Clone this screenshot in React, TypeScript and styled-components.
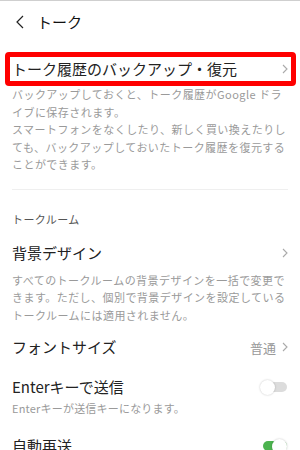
import React from "react";
import styled, { createGlobalStyle, css } from "styled-components";

const Global = createGlobalStyle`
  html, body { margin: 0; padding: 0; background: #fff; }
  body {
    font-family: "Noto Sans CJK JP", "Noto Sans", sans-serif;
    color: #222;
    -webkit-font-smoothing: antialiased;
  }
`;

const Page = styled.div`
  width: 300px;
  height: 450px;
  overflow: hidden;
  border-top: 1px solid #cfcfcf;
  box-sizing: border-box;
`;

const Header = styled.header`
  height: 41px;
  display: flex;
  align-items: center;
  gap: 13px;
  padding-left: 16px;
`;

const HeaderTitle = styled.h1`
  margin: 0;
  font-size: 15px;
  font-weight: 400;
  line-height: 20px;
  color: #111;
`;

const Row = styled.div<{ $mt?: number; $h?: number; $highlight?: boolean }>`
  position: relative;
  display: flex;
  align-items: center;
  justify-content: space-between;
  height: ${(p) => p.$h ?? 34}px;
  margin-top: ${(p) => p.$mt ?? 0}px;
  padding: 0 12px;
  ${(p) =>
    p.$highlight &&
    css`
      &::after {
        content: "";
        position: absolute;
        left: 5px;
        right: 4px;
        top: 0;
        bottom: 0;
        border: 5px solid #ff0000;
        border-radius: 4px;
        pointer-events: none;
      }
    `}
`;

const Title = styled.span`
  font-size: 15px;
  line-height: 20px;
  color: #222;
`;

const Trail = styled.span`
  display: flex;
  align-items: center;
  gap: 6px;
  color: #999;
  font-size: 13px;
`;

const Desc = styled.p<{ $mt?: number; $small?: boolean }>`
  margin: ${(p) => p.$mt ?? 0}px 0 0;
  padding: 0 12px;
  font-size: 11px;
  letter-spacing: ${(p) => (p.$small ? 0.2 : 0.45)}px;
  line-height: ${(p) => (p.$small ? 16 : 17.5)}px;
  color: #9a9a9a;
`;

const Divider = styled.hr`
  margin: 15px 12px 0;
  border: 0;
  border-top: 1px solid #efefef;
  height: 0;
`;

const SectionLabel = styled.div`
  margin-top: 20px;
  padding: 0 12px;
  font-size: 11px;
  letter-spacing: 0.4px;
  line-height: 18px;
  color: #555;
`;

const Toggle = styled.span<{ $on?: boolean }>`
  position: relative;
  display: inline-block;
  width: 27px;
  height: 15px;
  margin-right: 1px;
  &::before {
    content: "";
    position: absolute;
    left: 3px;
    right: 0;
    top: 2.5px;
    height: 10px;
    border-radius: 5px;
    background: ${(p) => (p.$on ? "#4cb34f" : "#dcdcdc")};
  }
  &::after {
    content: "";
    position: absolute;
    top: 0;
    left: ${(p) => (p.$on ? "12px" : "0")};
    width: 15px;
    height: 15px;
    border-radius: 50%;
    background: #fff;
    box-shadow: 0 0 2px rgba(0, 0, 0, 0.25);
  }
`;

const Chevron = () => (
  <svg width="6" height="10" viewBox="0 0 6 10">
    <polyline points="1,1 5,5 1,9" fill="none" stroke="#aaa" strokeWidth="1.1" />
  </svg>
);

const Back = () => (
  <svg width="8" height="14" viewBox="0 0 8 14">
    <polyline points="7,1 1,7 7,13" fill="none" stroke="#222" strokeWidth="1.2" />
  </svg>
);

export default function App() {
  return (
    <>
      <Global />
      <Page>
        <Header>
          <Back />
          <HeaderTitle>トーク</HeaderTitle>
        </Header>

        <Row $mt={10} $highlight>
          <Title>トーク履歴のバックアップ・復元</Title>
          <Chevron />
        </Row>
        <Desc>
          バックアップしておくと、トーク履歴がGoogle ドライブに保存されます。
          <br />
          スマートフォンをなくしたり、新しく買い換えたりしても、バックアップしておいたトーク履歴を復元することができます。
        </Desc>

        <Divider />

        <SectionLabel>トークルーム</SectionLabel>

        <Row $mt={8} $h={35}>
          <Title>背景デザイン</Title>
          <Chevron />
        </Row>
        <Desc $mt={1}>
          すべてのトークルームの背景デザインを一括で変更できます。ただし、個別で背景デザインを設定しているトークルームには適用されません。
        </Desc>

        <Row $mt={6}>
          <Title>フォントサイズ</Title>
          <Trail>
            普通
            <Chevron />
          </Trail>
        </Row>

        <Row $mt={11} $h={24}>
          <Title>Enterキーで送信</Title>
          <Toggle />
        </Row>
        <Desc $small $mt={1}>Enterキーが送信キーになります。</Desc>

        <Row $mt={18} $h={24}>
          <Title>自動再送</Title>
          <Toggle $on />
        </Row>
      </Page>
    </>
  );
}
